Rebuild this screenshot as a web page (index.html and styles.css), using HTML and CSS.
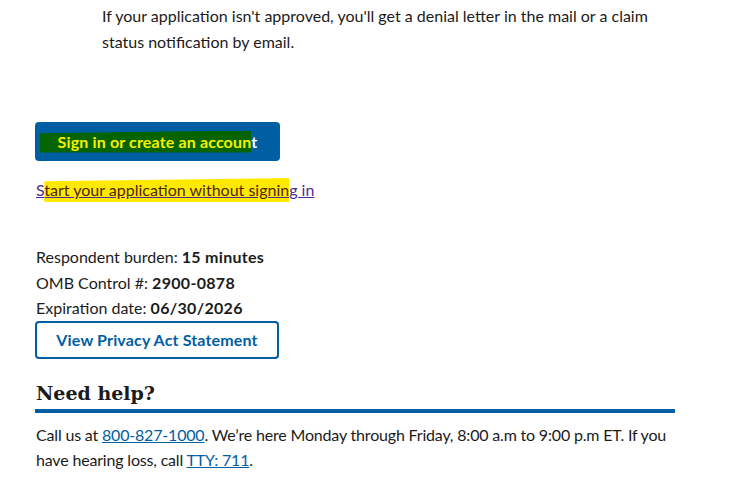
FILE: index.html
```html
<!DOCTYPE html>
<html lang="en">
<head>
<meta charset="utf-8">
<title>Apply</title>
<link rel="stylesheet" href="styles.css">
</head>
<body>
<main class="page">
  <p class="step-text">If your application isn't approved, you'll get a denial letter in the mail or a claim status notification by email.</p>

  <div class="actions">
    <a class="btn-primary" href="#"><span class="hl-green">Sign in or create an accoun</span>t</a>
    <p class="link-line"><a class="plain-link" href="#">S<span class="hl-yellow">tart your application without signin</span>g in</a></p>
  </div>

  <div class="omb">
    <div class="omb-row">Respondent burden: <strong>15 minutes</strong></div>
    <div class="omb-row">OMB Control #: <strong>2900-0878</strong></div>
    <div class="omb-row">Expiration date: <strong>06/30/2026</strong></div>
    <button class="btn-outline" type="button">View Privacy Act Statement</button>
  </div>

  <section class="help">
    <h2 class="help-title">Need help?</h2>
    <p class="help-text">Call us at <a class="blue-link" href="#">800-827-1000</a>. We’re here Monday through Friday, 8:00 a.m to 9:00 p.m ET. If you have hearing loss, call <a class="blue-link" href="#">TTY: 711</a>.</p>
  </section>
</main>
</body>
</html>
```

FILE: styles.css
```css
html, body {
  margin: 0;
  padding: 0;
  background: #ffffff;
}

body {
  font-family: "Lato", "Liberation Sans", sans-serif;
  font-size: 16px;
  color: #1b1b1b;
}

.page {
  width: 640px;
  padding-left: 35px;
  padding-top: 3px;
}

.step-text {
  margin: 0 0 0 67px;
  width: 570px;
  line-height: 26px;
}

.actions {
  margin-top: 67px;
}

.btn-primary {
  display: inline-flex;
  align-items: center;
  justify-content: center;
  box-sizing: border-box;
  width: 245px;
  height: 39px;
  background: #005ea2;
  color: #ffffff;
  font-weight: 700;
  text-decoration: none;
  border-radius: 4px;
  letter-spacing: 0.15px;
}

.hl-green {
  background: #056400;
  color: #f4f000;
  padding: 1px 0 2px 18px;
  margin-left: -18px;
  clip-path: polygon(0 12%, 100% 0, 100% 100%, 0 100%);
}

.link-line {
  margin: 19px 0 0 1px;
  line-height: 20px;
}

.plain-link {
  color: #4c2c92;
  text-decoration: underline;
}

.hl-yellow {
  background: #ffe900;
  color: #4c2700;
  padding: 2px 0 3px 0;
  clip-path: polygon(0 14%, 100% 0, 100% 100%, 0 100%);
}

.omb {
  margin-top: 44px;
  line-height: 25.5px;
}

.omb-row {
  padding-left: 1px;
}

.omb strong {
  font-weight: 700;
  letter-spacing: 0.3px;
}

.btn-outline {
  display: block;
  margin-top: 0;
  box-sizing: border-box;
  width: 244px;
  height: 38px;
  background: #ffffff;
  border: 2px solid #005ea2;
  border-radius: 4px;
  color: #005ea2;
  font-family: inherit;
  font-size: 16px;
  font-weight: 700;
  padding: 0;
  letter-spacing: 0.15px;
}

.help {
  margin-top: 20px;
}

.help-title {
  margin: 0;
  font-family: "DejaVu Serif", "Liberation Serif", serif;
  font-weight: 700;
  font-size: 19px;
  line-height: 28px;
  padding-bottom: 2px;
  border-bottom: 4px solid #005ea2;
  padding-left: 1px;
}

.help-text {
  margin: 9px 0 0 1px;
  line-height: 25px;
  letter-spacing: -0.18px;
}

.blue-link {
  color: #005ea2;
  text-decoration: underline;
}
```
